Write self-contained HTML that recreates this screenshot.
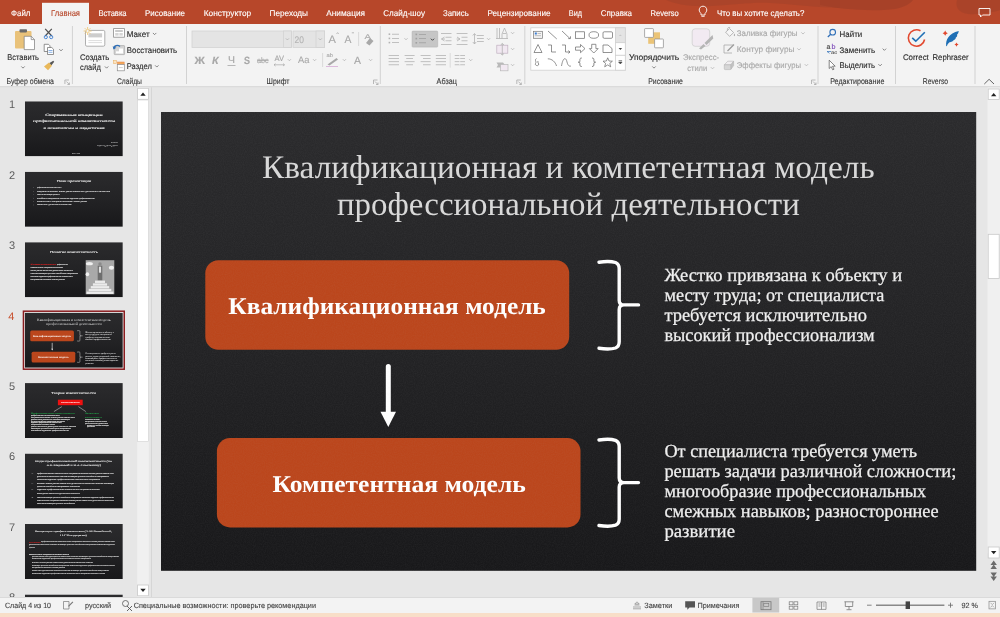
<!DOCTYPE html>
<html><head><meta charset="utf-8"><title>PowerPoint</title>
<style>html,body{margin:0;padding:0;width:1000px;height:617px;overflow:hidden;background:#e6e6e6;font-family:"Liberation Sans",sans-serif}svg{display:block;will-change:transform}</style></head>
<body>
<svg width="1000" height="617" viewBox="0 0 1000 617" text-rendering="geometricPrecision">
<defs>
<linearGradient id="slidebg" x1="0" y1="0" x2="0" y2="1"><stop offset="0" stop-color="#2b2b2d"/><stop offset="0.5" stop-color="#232325"/><stop offset="1" stop-color="#18181a"/></linearGradient>
<filter id="noise" x="0" y="0" width="100%" height="100%"><feTurbulence type="fractalNoise" baseFrequency="0.9" numOctaves="2" seed="3"/><feColorMatrix type="matrix" values="0 0 0 0 0.5  0 0 0 0 0.5  0 0 0 0 0.5  1.2 0 0 0 -0.35"/></filter>
<clipPath id="paneclip"><rect x="0" y="87.2" width="151" height="509.8"/></clipPath>
<clipPath id="slideclip"><rect x="161" y="112" width="815.5" height="458"/></clipPath>
</defs>
<rect x="0" y="0" width="1000" height="617" fill="#e6e6e6"/>
<rect x="0" y="0" width="1000" height="24" fill="#b7472a"/>
<path d="M666 0 C675 4 690 7 712 6 C735 5 752 2 770 3 C790 4 810 7 840 8 L840 0 Z" fill="#a2412a" opacity="0.55"/>
<path d="M820 0 L820 5 C840 9 870 12 895 9 C905 7 910 4 913 0 Z" fill="#9e3f28" opacity="0.65"/>
<path d="M957 0 C955 6 958 13 968 14 C980 15 995 12 1000 10 L1000 0 Z" fill="#a2412a" opacity="0.6"/>
<rect x="42" y="2.8" width="47" height="22" fill="#f3f3f3"/>
<text x="11.00" y="16.20" font-family="'Liberation Sans', sans-serif" font-size="8.4" font-weight="400" fill="#ffffff" stroke="#ffffff" stroke-width="0.12" textLength="19.40" lengthAdjust="spacingAndGlyphs" >Файл</text>
<text x="51.00" y="16.20" font-family="'Liberation Sans', sans-serif" font-size="8.4" font-weight="400" fill="#b7472a" stroke="#b7472a" stroke-width="0.12" textLength="29.00" lengthAdjust="spacingAndGlyphs" >Главная</text>
<text x="98.40" y="16.20" font-family="'Liberation Sans', sans-serif" font-size="8.4" font-weight="400" fill="#ffffff" stroke="#ffffff" stroke-width="0.12" textLength="28.20" lengthAdjust="spacingAndGlyphs" >Вставка</text>
<text x="145.00" y="16.20" font-family="'Liberation Sans', sans-serif" font-size="8.4" font-weight="400" fill="#ffffff" stroke="#ffffff" stroke-width="0.12" textLength="40.00" lengthAdjust="spacingAndGlyphs" >Рисование</text>
<text x="203.75" y="16.20" font-family="'Liberation Sans', sans-serif" font-size="8.4" font-weight="400" fill="#ffffff" stroke="#ffffff" stroke-width="0.12" textLength="47.50" lengthAdjust="spacingAndGlyphs" >Конструктор</text>
<text x="269.50" y="16.20" font-family="'Liberation Sans', sans-serif" font-size="8.4" font-weight="400" fill="#ffffff" stroke="#ffffff" stroke-width="0.12" textLength="38.50" lengthAdjust="spacingAndGlyphs" >Переходы</text>
<text x="326.25" y="16.20" font-family="'Liberation Sans', sans-serif" font-size="8.4" font-weight="400" fill="#ffffff" stroke="#ffffff" stroke-width="0.12" textLength="38.75" lengthAdjust="spacingAndGlyphs" >Анимация</text>
<text x="383.25" y="16.20" font-family="'Liberation Sans', sans-serif" font-size="8.4" font-weight="400" fill="#ffffff" stroke="#ffffff" stroke-width="0.12" textLength="41.75" lengthAdjust="spacingAndGlyphs" >Слайд-шоу</text>
<text x="443.00" y="16.20" font-family="'Liberation Sans', sans-serif" font-size="8.4" font-weight="400" fill="#ffffff" stroke="#ffffff" stroke-width="0.12" textLength="25.75" lengthAdjust="spacingAndGlyphs" >Запись</text>
<text x="487.50" y="16.20" font-family="'Liberation Sans', sans-serif" font-size="8.4" font-weight="400" fill="#ffffff" stroke="#ffffff" stroke-width="0.12" textLength="63.00" lengthAdjust="spacingAndGlyphs" >Рецензирование</text>
<text x="568.75" y="16.20" font-family="'Liberation Sans', sans-serif" font-size="8.4" font-weight="400" fill="#ffffff" stroke="#ffffff" stroke-width="0.12" textLength="13.25" lengthAdjust="spacingAndGlyphs" >Вид</text>
<text x="600.75" y="16.20" font-family="'Liberation Sans', sans-serif" font-size="8.4" font-weight="400" fill="#ffffff" stroke="#ffffff" stroke-width="0.12" textLength="31.25" lengthAdjust="spacingAndGlyphs" >Справка</text>
<text x="650.50" y="16.20" font-family="'Liberation Sans', sans-serif" font-size="8.4" font-weight="400" fill="#ffffff" stroke="#ffffff" stroke-width="0.12" textLength="28.25" lengthAdjust="spacingAndGlyphs" >Reverso</text>
<text x="716.90" y="16.20" font-family="'Liberation Sans', sans-serif" font-size="8.4" font-weight="400" fill="#ffffff" stroke="#ffffff" stroke-width="0.12" textLength="87.40" lengthAdjust="spacingAndGlyphs" >Что вы хотите сделать?</text>
<path d="M703 6.2 C700.6 6.2 699.2 8 699.2 10 C699.2 11.7 700.4 12.6 701 13.6 L701 15 L705 15 L705 13.6 C705.6 12.6 706.8 11.7 706.8 10 C706.8 8 705.4 6.2 703 6.2 Z M701.4 16.3 H704.6" fill="none" stroke="#fff" stroke-width="0.9"/>
<path d="M979 8.5 H990 V15 H982.5 L980.5 17 V15 H979 Z" fill="none" stroke="#fff" stroke-width="0.9"/>
<rect x="0" y="24" width="1000" height="62.5" fill="#f3f3f3"/>
<rect x="0" y="86.2" width="1000" height="1" fill="#d6d6d6"/>
<text x="6.50" y="84.20" font-family="'Liberation Sans', sans-serif" font-size="8.2" font-weight="400" fill="#3a3a3a" stroke="#3a3a3a" stroke-width="0.12" textLength="47.50" lengthAdjust="spacingAndGlyphs" >Буфер обмена</text>
<text x="116.90" y="84.20" font-family="'Liberation Sans', sans-serif" font-size="8.2" font-weight="400" fill="#383838" stroke="#383838" stroke-width="0.12" textLength="25.00" lengthAdjust="spacingAndGlyphs" >Слайды</text>
<text x="266.60" y="84.20" font-family="'Liberation Sans', sans-serif" font-size="8.2" font-weight="400" fill="#383838" stroke="#383838" stroke-width="0.12" textLength="22.80" lengthAdjust="spacingAndGlyphs" >Шрифт</text>
<text x="436.60" y="84.20" font-family="'Liberation Sans', sans-serif" font-size="8.2" font-weight="400" fill="#383838" stroke="#383838" stroke-width="0.12" textLength="20.30" lengthAdjust="spacingAndGlyphs" >Абзац</text>
<text x="648.20" y="84.20" font-family="'Liberation Sans', sans-serif" font-size="8.2" font-weight="400" fill="#383838" stroke="#383838" stroke-width="0.12" textLength="34.70" lengthAdjust="spacingAndGlyphs" >Рисование</text>
<text x="830.20" y="84.20" font-family="'Liberation Sans', sans-serif" font-size="8.2" font-weight="400" fill="#383838" stroke="#383838" stroke-width="0.12" textLength="54.20" lengthAdjust="spacingAndGlyphs" >Редактирование</text>
<text x="922.70" y="84.20" font-family="'Liberation Sans', sans-serif" font-size="8.2" font-weight="400" fill="#383838" stroke="#383838" stroke-width="0.12" textLength="25.50" lengthAdjust="spacingAndGlyphs" >Reverso</text>
<rect x="71.90" y="26" width="1" height="58" fill="#d2d2d2"/>
<rect x="186.00" y="26" width="1" height="58" fill="#d2d2d2"/>
<rect x="379.80" y="26" width="1" height="58" fill="#d2d2d2"/>
<rect x="524.30" y="26" width="1" height="58" fill="#d2d2d2"/>
<rect x="817.50" y="26" width="1" height="58" fill="#d2d2d2"/>
<rect x="895.00" y="26" width="1" height="58" fill="#d2d2d2"/>
<rect x="974.50" y="26" width="1" height="58" fill="#d2d2d2"/>
<path d="M64.9 84.0 V80.0 H68.9" fill="none" stroke="#a8a8a8" stroke-width="0.8"/>
<path d="M66.4 81.5 L69.4 84.5 M69.4 82.5 V84.5 H67.4" fill="none" stroke="#a8a8a8" stroke-width="0.8"/>
<path d="M373.5 84.0 V80.0 H377.5" fill="none" stroke="#a8a8a8" stroke-width="0.8"/>
<path d="M375 81.5 L378 84.5 M378 82.5 V84.5 H376" fill="none" stroke="#a8a8a8" stroke-width="0.8"/>
<path d="M516.8 84.0 V80.0 H520.8" fill="none" stroke="#a8a8a8" stroke-width="0.8"/>
<path d="M518.3 81.5 L521.3 84.5 M521.3 82.5 V84.5 H519.3" fill="none" stroke="#a8a8a8" stroke-width="0.8"/>
<path d="M811.5 84.0 V80.0 H815.5" fill="none" stroke="#a8a8a8" stroke-width="0.8"/>
<path d="M813 81.5 L816 84.5 M816 82.5 V84.5 H814" fill="none" stroke="#a8a8a8" stroke-width="0.8"/>
<rect x="15" y="31" width="16.5" height="17.5" rx="1" fill="#e9c27a"/>
<rect x="19.5" y="29.2" width="7.5" height="3.2" rx="0.8" fill="#6b6b6b"/>
<path d="M24.2 36.3 H31.2 L34.5 39.6 V49.6 H24.2 Z" fill="#fff" stroke="#7a7a7a" stroke-width="0.7"/>
<path d="M31.2 36.3 V39.6 H34.5" fill="none" stroke="#7a7a7a" stroke-width="0.7"/>
<text x="7.20" y="59.70" font-family="'Liberation Sans', sans-serif" font-size="8.2" font-weight="400" fill="#2a2a2a" stroke="#2a2a2a" stroke-width="0.12" textLength="31.80" lengthAdjust="spacingAndGlyphs" >Вставить</text>
<path d="M21.30 66.45 L23.00 68.15 L24.70 66.45" fill="none" stroke="#6a6a6a" stroke-width="0.8"/>
<path d="M45.2 28.8 L51.8 36 M51.8 28.8 L45.2 36" stroke="#505050" stroke-width="1.2" fill="none"/>
<circle cx="45.8" cy="37.1" r="1.6" fill="none" stroke="#3b7ed4" stroke-width="0.9"/><circle cx="51.2" cy="37.1" r="1.6" fill="none" stroke="#3b7ed4" stroke-width="0.9"/>
<path d="M44.2 44.3 H48.5 L50 45.8 V51.5 H44.2 Z" fill="#fff" stroke="#666" stroke-width="0.7"/>
<path d="M47.5 47.5 H51.8 L53.5 49.2 V54.5 H47.5 Z" fill="#fff" stroke="#666" stroke-width="0.7"/>
<path d="M48.5 50.5 H52.5 M48.5 52.3 H52.5" stroke="#3b7ed4" stroke-width="0.6"/>
<path d="M59.30 49.15 L61.00 50.85 L62.70 49.15" fill="none" stroke="#6a6a6a" stroke-width="0.8"/>
<path d="M44 66.5 L49 62.5 L52 65.7 L48 70.2 Z" fill="#e9b85a"/>
<path d="M49.5 63 L53.3 60.8 L54.2 61.8 L51.5 65.2 Z" fill="#555"/>
<rect x="85.5" y="30.4" width="19.3" height="15.8" rx="1.4" fill="#fff" stroke="#9a9a9a" stroke-width="0.8"/>
<rect x="88.4" y="33.3" width="13.7" height="4.1" fill="#cdcdcd"/>
<path d="M88.4 40.6 H102 M88.4 42.6 H102" stroke="#c4c4c4" stroke-width="0.6"/>
<circle cx="87.6" cy="31" r="1.6" fill="#f3f3f3" stroke="#efc36a" stroke-width="0.7"/>
<path d="M87.6 27 V29 M87.6 33 V35 M83.6 31 H85.6 M89.6 31 H91.6 M84.8 28.2 L86.2 29.6 M89 32.4 L90.4 33.8 M90.4 28.2 L89 29.6 M86.2 32.4 L84.8 33.8" stroke="#efc36a" stroke-width="0.8"/>
<text x="80.00" y="59.70" font-family="'Liberation Sans', sans-serif" font-size="8.2" font-weight="400" fill="#2a2a2a" stroke="#2a2a2a" stroke-width="0.12" textLength="29.20" lengthAdjust="spacingAndGlyphs" >Создать</text>
<text x="80.00" y="70.40" font-family="'Liberation Sans', sans-serif" font-size="8.2" font-weight="400" fill="#2a2a2a" stroke="#2a2a2a" stroke-width="0.12" textLength="20.80" lengthAdjust="spacingAndGlyphs" >слайд</text>
<path d="M104.90 66.45 L106.60 68.15 L108.30 66.45" fill="none" stroke="#6a6a6a" stroke-width="0.8"/>
<rect x="113.6" y="28.6" width="10.8" height="8.6" fill="#fff" stroke="#8d8d8d" stroke-width="0.8"/>
<rect x="115.2" y="30.2" width="7.6" height="1.6" fill="#bdbdbd"/><rect x="115.2" y="33" width="3.4" height="2.6" fill="#d6d6d6"/><rect x="119.4" y="33" width="3.4" height="2.6" fill="#d6d6d6"/>
<text x="126.80" y="37.00" font-family="'Liberation Sans', sans-serif" font-size="8.2" font-weight="400" fill="#2a2a2a" stroke="#2a2a2a" stroke-width="0.12" textLength="22.80" lengthAdjust="spacingAndGlyphs" >Макет</text>
<path d="M152.90 32.95 L154.60 34.65 L156.30 32.95" fill="none" stroke="#6a6a6a" stroke-width="0.8"/>
<rect x="114.2" y="45.6" width="10.4" height="9" rx="0.6" fill="#d4d4d4" stroke="#a8a8a8" stroke-width="0.7"/>
<path d="M119 48.5 H123 V53.4 H119 Z M116 51.5 H119" fill="#fff" stroke="none"/><rect x="116" y="51.3" width="3" height="2.1" fill="#fff"/>
<path d="M113.8 48.6 C114.2 45.6 117.5 44.4 120 46.4" fill="none" stroke="#2f6fb8" stroke-width="1.3"/><path d="M112.7 46.2 L113.6 49.4 L116.4 47.8 Z" fill="#2f6fb8"/>
<text x="126.80" y="53.20" font-family="'Liberation Sans', sans-serif" font-size="8.2" font-weight="400" fill="#2a2a2a" stroke="#2a2a2a" stroke-width="0.12" textLength="50.30" lengthAdjust="spacingAndGlyphs" >Восстановить</text>
<rect x="113.6" y="60.6" width="2.8" height="2.8" fill="#fbe3c0" stroke="#eab36a" stroke-width="0.6"/>
<rect x="117.4" y="62" width="6.8" height="2.4" fill="#f2a65a" stroke="#e8884a" stroke-width="0.5"/>
<rect x="117.3" y="64.6" width="7" height="6.2" fill="#fff" stroke="#8d8d8d" stroke-width="0.7"/><path d="M118.8 67.6 H122.8" stroke="#b0b0b0" stroke-width="0.6"/>
<text x="126.80" y="69.40" font-family="'Liberation Sans', sans-serif" font-size="8.2" font-weight="400" fill="#2a2a2a" stroke="#2a2a2a" stroke-width="0.12" textLength="25.00" lengthAdjust="spacingAndGlyphs" >Раздел</text>
<path d="M155.10 65.35 L156.80 67.05 L158.50 65.35" fill="none" stroke="#6a6a6a" stroke-width="0.8"/>
<rect x="192" y="31" width="99.4" height="16.4" fill="#e4e4e4" stroke="#d2d2d2" stroke-width="0.8"/>
<rect x="283.4" y="31" width="8" height="16.4" fill="#e4e4e4" stroke="#d2d2d2" stroke-width="0.8"/>
<path d="M285.90 38.45 L287.40 39.95 L288.90 38.45" fill="none" stroke="#b0b0b0" stroke-width="0.8"/>
<rect x="293" y="31" width="31.6" height="16.4" fill="#e4e4e4" stroke="#d2d2d2" stroke-width="0.8"/>
<rect x="316" y="31" width="8.6" height="16.4" fill="#e4e4e4" stroke="#d2d2d2" stroke-width="0.8"/>
<path d="M318.80 38.45 L320.30 39.95 L321.80 38.45" fill="none" stroke="#b0b0b0" stroke-width="0.8"/>
<text x="294.60" y="42.70" font-family="'Liberation Sans', sans-serif" font-size="9.5" font-weight="400" fill="#b4b4b4" stroke="#b4b4b4" stroke-width="0.12" textLength="9.40" lengthAdjust="spacingAndGlyphs" >20</text>
<text x="328.60" y="43.30" font-family="'Liberation Sans', sans-serif" font-size="11" font-weight="400" fill="#a8a8a8" stroke="#a8a8a8" stroke-width="0.12" textLength="7.40" lengthAdjust="spacingAndGlyphs" >A</text>
<text x="344.60" y="43.30" font-family="'Liberation Sans', sans-serif" font-size="11" font-weight="400" fill="#a8a8a8" stroke="#a8a8a8" stroke-width="0.12" textLength="6.90" lengthAdjust="spacingAndGlyphs" >A</text>
<path d="M336.5 34 L337.6 32.6 L338.7 34" fill="none" stroke="#a8a8a8" stroke-width="0.7"/>
<path d="M351.8 32.8 H354" stroke="#a8a8a8" stroke-width="0.8"/>
<rect x="358.10" y="32" width="1" height="14" fill="#dadada"/>
<text x="364.60" y="39.00" font-family="'Liberation Sans', sans-serif" font-size="7" font-weight="400" fill="#a8a8a8" stroke="#a8a8a8" stroke-width="0.12" textLength="6.40" lengthAdjust="spacingAndGlyphs" >A</text>
<path d="M366 43 L370 38 L373.5 41 L369.5 45.5 Z" fill="#a8a8a8"/>
<text x="194.60" y="63.60" font-family="'Liberation Sans', sans-serif" font-size="10.5" font-weight="700" fill="#a8a8a8" stroke="#a8a8a8" stroke-width="0.12" textLength="10.40" lengthAdjust="spacingAndGlyphs" >Ж</text>
<text x="212.00" y="63.60" font-family="'Liberation Sans', sans-serif" font-size="10.5" font-weight="700" fill="#a8a8a8" stroke="#a8a8a8" stroke-width="0.12" textLength="6.60" lengthAdjust="spacingAndGlyphs" font-style="italic">К</text>
<text x="228.00" y="63.00" font-family="'Liberation Sans', sans-serif" font-size="10" font-weight="400" fill="#a8a8a8" stroke="#a8a8a8" stroke-width="0.12" textLength="7.00" lengthAdjust="spacingAndGlyphs" >Ч</text>
<rect x="227.5" y="65" width="8" height="0.8" fill="#a8a8a8"/>
<text x="244.00" y="63.60" font-family="'Liberation Sans', sans-serif" font-size="10.5" font-weight="700" fill="#a8a8a8" stroke="#a8a8a8" stroke-width="0.12" textLength="6.00" lengthAdjust="spacingAndGlyphs" >S</text>
<text x="257.00" y="63.00" font-family="'Liberation Sans', sans-serif" font-size="7.8" font-weight="400" fill="#a8a8a8" stroke="#a8a8a8" stroke-width="0.12" textLength="11.60" lengthAdjust="spacingAndGlyphs" >abc</text>
<rect x="257" y="60.2" width="11.6" height="0.8" fill="#a8a8a8"/>
<text x="274.50" y="61.00" font-family="'Liberation Sans', sans-serif" font-size="8" font-weight="400" fill="#a8a8a8" stroke="#a8a8a8" stroke-width="0.12" textLength="9.50" lengthAdjust="spacingAndGlyphs" >AV</text>
<path d="M274 64.8 H284.5 M275.5 63.6 L274 64.8 L275.5 66 M283 63.6 L284.5 64.8 L283 66" fill="none" stroke="#a8a8a8" stroke-width="0.7"/>
<path d="M287.90 59.25 L289.40 60.75 L290.90 59.25" fill="none" stroke="#b0b0b0" stroke-width="0.8"/>
<text x="298.00" y="63.00" font-family="'Liberation Sans', sans-serif" font-size="9.5" font-weight="400" fill="#a8a8a8" stroke="#a8a8a8" stroke-width="0.12" textLength="11.40" lengthAdjust="spacingAndGlyphs" >Aa</text>
<path d="M313.10 59.25 L314.60 60.75 L316.10 59.25" fill="none" stroke="#b0b0b0" stroke-width="0.8"/>
<rect x="322.10" y="53" width="1" height="14" fill="#dadada"/>
<text x="326.50" y="57.00" font-family="'Liberation Sans', sans-serif" font-size="5.5" font-weight="400" fill="#a8a8a8" stroke="#a8a8a8" stroke-width="0.12" textLength="6.50" lengthAdjust="spacingAndGlyphs" >ab</text>
<path d="M327.5 64.5 L336.5 58 L338 59.5 L329.5 65.5 Z" fill="#a8a8a8"/><rect x="326" y="66" width="12" height="0.9" fill="#d9b3d9"/>
<path d="M342.90 59.25 L344.40 60.75 L345.90 59.25" fill="none" stroke="#b0b0b0" stroke-width="0.8"/>
<text x="354.00" y="63.60" font-family="'Liberation Sans', sans-serif" font-size="10.5" font-weight="400" fill="#a8a8a8" stroke="#a8a8a8" stroke-width="0.12" textLength="7.00" lengthAdjust="spacingAndGlyphs" >A</text>
<path d="M369.10 59.25 L370.60 60.75 L372.10 59.25" fill="none" stroke="#b0b0b0" stroke-width="0.8"/>
<rect x="388.6" y="33.400000000000006" width="1.6" height="1.6" fill="#b3b3b3"/><rect x="392" y="33.800000000000004" width="7" height="0.8" fill="#b3b3b3"/>
<rect x="388.6" y="37.6" width="1.6" height="1.6" fill="#b3b3b3"/><rect x="392" y="38.0" width="7" height="0.8" fill="#b3b3b3"/>
<rect x="388.6" y="41.800000000000004" width="1.6" height="1.6" fill="#b3b3b3"/><rect x="392" y="42.2" width="7" height="0.8" fill="#b3b3b3"/>
<path d="M404.50 38.25 L406.00 39.75 L407.50 38.25" fill="none" stroke="#b0b0b0" stroke-width="0.8"/>
<rect x="412.1" y="31.1" width="25.6" height="16" rx="0.8" fill="#c6c6c6" stroke="#b3b3b3" stroke-width="0.6"/>
<rect x="415.5" y="33.6" width="1.6" height="1.6" fill="#a0a0a0"/><rect x="419" y="34.0" width="7" height="0.8" fill="#a0a0a0"/>
<rect x="415.5" y="37.800000000000004" width="1.6" height="1.6" fill="#a0a0a0"/><rect x="419" y="38.2" width="7" height="0.8" fill="#a0a0a0"/>
<rect x="415.5" y="42.0" width="1.6" height="1.6" fill="#a0a0a0"/><rect x="419" y="42.4" width="7" height="0.8" fill="#a0a0a0"/>
<path d="M430.90 38.70 L432.50 40.30 L434.10 38.70" fill="none" stroke="#444" stroke-width="1.0"/>
<rect x="441" y="33.1" width="10.5" height="0.8" fill="#b3b3b3"/>
<rect x="441" y="44.1" width="10.5" height="0.8" fill="#b3b3b3"/>
<rect x="445.5" y="36.800000000000004" width="6.0" height="0.8" fill="#b3b3b3"/>
<rect x="445.5" y="40.4" width="6.0" height="0.8" fill="#b3b3b3"/>
<path d="M444.5 37 L441.5 39 L444.5 41 M441.5 39 H445" fill="none" stroke="#b3b3b3" stroke-width="0.8"/>
<rect x="456.6" y="33.1" width="10.899999999999977" height="0.8" fill="#b3b3b3"/>
<rect x="456.6" y="44.1" width="10.899999999999977" height="0.8" fill="#b3b3b3"/>
<rect x="461.5" y="36.800000000000004" width="6.0" height="0.8" fill="#b3b3b3"/>
<rect x="461.5" y="40.4" width="6.0" height="0.8" fill="#b3b3b3"/>
<path d="M457 37 L460 39 L457 41 M456.6 39 H460" fill="none" stroke="#b3b3b3" stroke-width="0.8"/>
<rect x="477" y="35.1" width="6.800000000000011" height="0.8" fill="#b3b3b3"/>
<rect x="477" y="38.1" width="6.800000000000011" height="0.8" fill="#b3b3b3"/>
<rect x="477" y="41.1" width="6.800000000000011" height="0.8" fill="#b3b3b3"/>
<path d="M472.8 35.5 L474.5 33.5 L476.2 35.5 M474.5 34 V44 M472.8 42 L474.5 44 L476.2 42" fill="none" stroke="#b3b3b3" stroke-width="0.8"/>
<path d="M487.10 38.25 L488.60 39.75 L490.10 38.25" fill="none" stroke="#b0b0b0" stroke-width="0.8"/>
<path d="M497 28 V38.5 M499.5 28 V38.5 M502 38.5 V34 L504.5 28 L507 34 V38.5 M502.8 33.5 H506.2 M496 38.5 H508" fill="none" stroke="#b3b3b3" stroke-width="0.8"/>
<path d="M511.10 32.25 L512.60 33.75 L514.10 32.25" fill="none" stroke="#b0b0b0" stroke-width="0.8"/>
<rect x="496.8" y="45.2" width="11" height="8" fill="#f1e8f1" stroke="#c0b0c0" stroke-width="0.7"/><path d="M502.3 43.5 V55 M500.6 45 L502.3 43.5 L504 45 M500.6 53.5 L502.3 55 L504 53.5" fill="none" stroke="#b3b3b3" stroke-width="0.8"/>
<path d="M511.10 48.25 L512.60 49.75 L514.10 48.25" fill="none" stroke="#b0b0b0" stroke-width="0.8"/>
<path d="M496.5 62.5 H503 L505 65 L503 67.5 H496.5 L498 65 Z" fill="#b9b9b9"/><rect x="500.5" y="64.5" width="7.5" height="6.3" fill="#f1e8f1" stroke="#b9b9b9" stroke-width="0.7"/>
<path d="M511.10 64.25 L512.60 65.75 L514.10 64.25" fill="none" stroke="#b0b0b0" stroke-width="0.8"/>
<rect x="388.6" y="55.1" width="10.399999999999977" height="0.8" fill="#b3b3b3"/>
<rect x="388.6" y="58.2" width="10.399999999999977" height="0.8" fill="#b3b3b3"/>
<rect x="388.6" y="61.300000000000004" width="10.399999999999977" height="0.8" fill="#b3b3b3"/>
<rect x="388.6" y="64.39999999999999" width="10.399999999999977" height="0.8" fill="#b3b3b3"/>
<rect x="404.6" y="55.1" width="10.0" height="0.8" fill="#b3b3b3"/>
<rect x="404.6" y="61.300000000000004" width="10.0" height="0.8" fill="#b3b3b3"/>
<rect x="406.2" y="58.2" width="6.800000000000011" height="0.8" fill="#b3b3b3"/>
<rect x="406.2" y="64.39999999999999" width="6.800000000000011" height="0.8" fill="#b3b3b3"/>
<rect x="420.6" y="55.1" width="10.0" height="0.8" fill="#b3b3b3"/>
<rect x="420.6" y="61.300000000000004" width="10.0" height="0.8" fill="#b3b3b3"/>
<rect x="423" y="58.2" width="7.600000000000023" height="0.8" fill="#b3b3b3"/>
<rect x="423" y="64.39999999999999" width="7.600000000000023" height="0.8" fill="#b3b3b3"/>
<rect x="435.8" y="55.1" width="10.199999999999989" height="0.8" fill="#b3b3b3"/>
<rect x="435.8" y="58.2" width="10.199999999999989" height="0.8" fill="#b3b3b3"/>
<rect x="435.8" y="61.300000000000004" width="10.199999999999989" height="0.8" fill="#b3b3b3"/>
<rect x="435.8" y="64.39999999999999" width="10.199999999999989" height="0.8" fill="#b3b3b3"/>
<rect x="449.70" y="53" width="1" height="14.599999999999994" fill="#dadada"/>
<rect x="454.7" y="55.1" width="10.300000000000011" height="0.8" fill="#b3b3b3"/>
<rect x="454.7" y="58.2" width="10.300000000000011" height="0.8" fill="#b3b3b3"/>
<rect x="454.7" y="61.300000000000004" width="10.300000000000011" height="0.8" fill="#b3b3b3"/>
<rect x="454.7" y="64.39999999999999" width="10.300000000000011" height="0.8" fill="#b3b3b3"/>
<rect x="459.4" y="55" width="0.8" height="10.2" fill="#f3f3f3"/>
<path d="M469.20 59.25 L470.70 60.75 L472.20 59.25" fill="none" stroke="#b0b0b0" stroke-width="0.8"/>
<rect x="530.8" y="27.8" width="94.5" height="42.4" fill="#fff" stroke="#d0d0d0" stroke-width="0.8"/>
<rect x="615.4" y="27.8" width="9.9" height="14.9" fill="#e4e4e4" stroke="#d0d0d0" stroke-width="0.8"/>
<rect x="615.4" y="42.7" width="9.9" height="12.6" fill="#fff" stroke="#d0d0d0" stroke-width="0.8"/>
<rect x="615.4" y="55.3" width="9.9" height="14.9" fill="#fff" stroke="#d0d0d0" stroke-width="0.8"/>
<path d="M618.8 36 L620.35 34.5 L621.9 36 Z" fill="#c8c8c8"/>
<path d="M618.6 48 L620.35 50 L622.1 48 Z" fill="#444"/>
<path d="M618.6 60.6 H622.1 M618.6 62 L620.35 64 L622.1 62 Z" fill="#444" stroke="#444" stroke-width="0.6"/>
<rect x="533.5" y="31.3" width="9" height="7" fill="#f4f4f4" stroke="#777" stroke-width="0.7"/><rect x="534.8" y="32.5" width="2" height="2" fill="#3b7ed4"/><path d="M537.5 33.5 H541 M534.8 35.7 H541" stroke="#888" stroke-width="0.5"/><path d="M548 31 L556.8 39" stroke="#666" stroke-width="0.7"/><path d="M562 31 L570 38.6 M568.2 38.6 H570.5 V36.3" fill="none" stroke="#666" stroke-width="0.7"/><rect x="575.5" y="31.8" width="9" height="6.5" fill="none" stroke="#666" stroke-width="0.7"/><ellipse cx="593.8" cy="35" rx="4.8" ry="3.3" fill="none" stroke="#666" stroke-width="0.7"/><rect x="603" y="31.8" width="9.5" height="6.5" rx="1.2" fill="none" stroke="#666" stroke-width="0.7"/><path d="M534 52.5 L538 44.5 L542 52.5 Z" fill="none" stroke="#666" stroke-width="0.7"/><path d="M548 45 H551.5 V52 H556" fill="none" stroke="#666" stroke-width="0.7"/><path d="M562 45 H565.5 V52 H570 M568.3 50.6 L570 52 L568.3 53.4" fill="none" stroke="#666" stroke-width="0.7"/><path d="M575.5 47 H580.5 V44.5 L585 48.6 L580.5 52.7 V50.2 H575.5 Z" fill="none" stroke="#666" stroke-width="0.7"/><path d="M591.7 44.3 H595.9 V48.6 H598.2 L593.8 53 L589.4 48.6 H591.7 Z" fill="none" stroke="#666" stroke-width="0.7"/><path d="M603 45 H608 L612 48.5 V52.5 H603 Z" fill="none" stroke="#666" stroke-width="0.7"/><path d="M536.5 58.5 C534 60 537 62 535.5 63.5 C534.5 65 537.5 66.5 538.5 65 C539.5 63.5 537 62.5 538 61" fill="none" stroke="#666" stroke-width="0.7"/><path d="M547.8 58.8 C552 58.8 555.5 62 556.5 66" fill="none" stroke="#666" stroke-width="0.7"/><path d="M561.5 66 C563 57 566 57 567 62 C568 66 569.5 66.5 571 66" fill="none" stroke="#666" stroke-width="0.7"/><path d="M581.8 58 C579.8 58 579.9 59 579.9 60.5 V61.3 C579.9 62 579.2 62.2 578.2 62.2 C579.2 62.2 579.9 62.4 579.9 63.1 V64 C579.9 65.5 579.8 66.5 581.8 66.5" fill="none" stroke="#666" stroke-width="0.8"/><path d="M592 58 C594 58 593.9 59 593.9 60.5 V61.3 C593.9 62 594.6 62.2 595.6 62.2 C594.6 62.2 593.9 62.4 593.9 63.1 V64 C593.9 65.5 594 66.5 592 66.5" fill="none" stroke="#666" stroke-width="0.8"/><path d="M607.7 57.8 L609 61 L612.4 61.2 L609.8 63.4 L610.7 66.8 L607.7 64.9 L604.7 66.8 L605.6 63.4 L603 61.2 L606.4 61 Z" fill="none" stroke="#666" stroke-width="0.7"/>
<rect x="648.2" y="32.3" width="11.8" height="11.5" fill="#ebc477"/>
<rect x="644.6" y="28.6" width="8.8" height="8.8" rx="0.6" fill="#fff" stroke="#8a8a8a" stroke-width="0.7"/>
<rect x="654.6" y="39" width="8.8" height="8.8" rx="0.6" fill="#fff" stroke="#8a8a8a" stroke-width="0.7"/>
<text x="628.90" y="59.80" font-family="'Liberation Sans', sans-serif" font-size="8.2" font-weight="400" fill="#2a2a2a" stroke="#2a2a2a" stroke-width="0.12" textLength="50.40" lengthAdjust="spacingAndGlyphs" >Упорядочить</text>
<path d="M652.30 66.45 L654.00 68.15 L655.70 66.45" fill="none" stroke="#6a6a6a" stroke-width="0.8"/>
<rect x="692.2" y="28.8" width="17.5" height="17.5" rx="3" fill="#f2eaf2" stroke="#cfcfcf" stroke-width="0.8"/>
<path d="M699 48.5 L703.5 44 L705.5 46 L701 49.5 Z M704.5 43 L712.5 35 L713.3 38.5 L706.5 45 Z" fill="#b5b5b5"/>
<text x="682.90" y="60.40" font-family="'Liberation Sans', sans-serif" font-size="8.2" font-weight="400" fill="#a8a8a8" stroke="#a8a8a8" stroke-width="0.12" textLength="36.30" lengthAdjust="spacingAndGlyphs" >Экспресс-</text>
<text x="687.20" y="70.80" font-family="'Liberation Sans', sans-serif" font-size="8.2" font-weight="400" fill="#a8a8a8" stroke="#a8a8a8" stroke-width="0.12" textLength="20.00" lengthAdjust="spacingAndGlyphs" >стили</text>
<path d="M710.80 67.15 L712.50 68.85 L714.20 67.15" fill="none" stroke="#b5b5b5" stroke-width="0.8"/>
<path d="M725.6 32.2 L729.6 28.6 L733.6 32.6 L729.6 36.4 Z" fill="#f6f6f6" stroke="#a8a8a8" stroke-width="0.8"/><path d="M727.4 30.4 C727 28 728.6 26.8 730.2 27.6" fill="none" stroke="#a8a8a8" stroke-width="0.7"/><path d="M734.4 33.6 C735.4 35 735.2 36 734.4 36.2 C733.6 36 733.6 35 734.4 33.6 Z" fill="#a8a8a8"/>
<text x="736.80" y="36.40" font-family="'Liberation Sans', sans-serif" font-size="8.2" font-weight="400" fill="#a8a8a8" stroke="#a8a8a8" stroke-width="0.12" textLength="60.80" lengthAdjust="spacingAndGlyphs" >Заливка фигуры</text>
<path d="M801.30 32.35 L803.00 34.05 L804.70 32.35" fill="none" stroke="#b5b5b5" stroke-width="0.8"/>
<path d="M733 45 H724 V53 H732" fill="none" stroke="#a8a8a8" stroke-width="0.8"/><path d="M727.5 51 L734 44.5" stroke="#9b9b9b" stroke-width="1.2"/>
<text x="736.80" y="52.40" font-family="'Liberation Sans', sans-serif" font-size="8.2" font-weight="400" fill="#a8a8a8" stroke="#a8a8a8" stroke-width="0.12" textLength="57.60" lengthAdjust="spacingAndGlyphs" >Контур фигуры</text>
<path d="M797.30 48.35 L799.00 50.05 L800.70 48.35" fill="none" stroke="#b5b5b5" stroke-width="0.8"/>
<path d="M724.3 64.8 L727.8 61.2 H733.6 L731 64.8 Z" fill="#f0eef0" stroke="#b5b5b5" stroke-width="0.6"/><path d="M724.3 64.8 H731 V68.8 Q731 69.6 730.2 69.6 H725.1 Q724.3 69.6 724.3 68.8 Z" fill="#d6d6d6" stroke="#b5b5b5" stroke-width="0.6"/><path d="M731 64.8 L733.6 61.2 V65.6 L731 69.2 Z" fill="#c2c2c2" stroke="#b5b5b5" stroke-width="0.6"/>
<text x="736.80" y="68.00" font-family="'Liberation Sans', sans-serif" font-size="8.2" font-weight="400" fill="#a8a8a8" stroke="#a8a8a8" stroke-width="0.12" textLength="64.20" lengthAdjust="spacingAndGlyphs" >Эффекты фигуры</text>
<path d="M804.70 64.15 L806.40 65.85 L808.10 64.15" fill="none" stroke="#b5b5b5" stroke-width="0.8"/>
<circle cx="832.7" cy="32.2" r="2.8" fill="none" stroke="#2f6fb8" stroke-width="1.1"/><path d="M830.7 34.3 L827.8 37" stroke="#2f6fb8" stroke-width="1.3"/>
<text x="839.60" y="36.60" font-family="'Liberation Sans', sans-serif" font-size="8.2" font-weight="400" fill="#2a2a2a" stroke="#2a2a2a" stroke-width="0.12" textLength="22.60" lengthAdjust="spacingAndGlyphs" >Найти</text>
<text x="826.50" y="48.50" font-family="'Liberation Sans', sans-serif" font-size="6.8" font-weight="400" fill="#444" stroke="#444" stroke-width="0.12" textLength="4.00" lengthAdjust="spacingAndGlyphs" >a</text>
<text x="831.50" y="48.50" font-family="'Liberation Sans', sans-serif" font-size="7" font-weight="400" fill="#7a46b8" stroke="#7a46b8" stroke-width="0.12" textLength="4.00" lengthAdjust="spacingAndGlyphs" >b</text>
<path d="M827 51.5 L829.5 53.3 M827 51.5 H831" stroke="#2f6fb8" stroke-width="0.7"/>
<text x="831.00" y="53.50" font-family="'Liberation Sans', sans-serif" font-size="4.8" font-weight="400" fill="#555" stroke="#555" stroke-width="0.12" textLength="6.20" lengthAdjust="spacingAndGlyphs" >ac</text>
<text x="839.60" y="52.70" font-family="'Liberation Sans', sans-serif" font-size="8.2" font-weight="400" fill="#2a2a2a" stroke="#2a2a2a" stroke-width="0.12" textLength="35.50" lengthAdjust="spacingAndGlyphs" >Заменить</text>
<path d="M882.70 48.65 L884.40 50.35 L886.10 48.65" fill="none" stroke="#6a6a6a" stroke-width="0.8"/>
<path d="M829.2 60.2 V68.5 L831.2 66.6 L832.7 69.8 L834 69.2 L832.5 66.2 L835.2 66.2 Z" fill="#fff" stroke="#555" stroke-width="0.7"/>
<text x="839.60" y="68.10" font-family="'Liberation Sans', sans-serif" font-size="8.2" font-weight="400" fill="#2a2a2a" stroke="#2a2a2a" stroke-width="0.12" textLength="35.50" lengthAdjust="spacingAndGlyphs" >Выделить</text>
<path d="M878.40 64.15 L880.10 65.85 L881.80 64.15" fill="none" stroke="#6a6a6a" stroke-width="0.8"/>
<path d="M920.5 30.8 A8.2 8.2 0 1 0 924.6 39.5" fill="none" stroke="#e2492f" stroke-width="1.6"/>
<path d="M912.2 37.8 L915.8 41.2 L924.8 32.2" fill="none" stroke="#1f6fb5" stroke-width="1.6"/>
<text x="902.90" y="60.00" font-family="'Liberation Sans', sans-serif" font-size="8.2" font-weight="400" fill="#2a2a2a" stroke="#2a2a2a" stroke-width="0.12" textLength="25.90" lengthAdjust="spacingAndGlyphs" >Correct</text>
<path d="M946.2 46 C945.5 40 948.5 33.5 958.8 31 C958.5 32.5 958 34 957 34.8 C957.5 35.8 957 37 955.8 37.6 C956 38.8 955 39.8 953.5 40.3 C953 41.5 951.5 42 949.5 42.3 C948.5 43 947.5 44.3 946.9 46.2 Z" fill="#1f6fb5"/>
<path d="M945.2 30.6 Q945.72 32.68 947.8000000000001 33.2 Q945.72 33.720000000000006 945.2 35.800000000000004 Q944.6800000000001 33.720000000000006 942.6 33.2 Q944.6800000000001 32.68 945.2 30.6 Z M956.5 42.5 Q956.92 44.18 958.6 44.6 Q956.92 45.02 956.5 46.7 Q956.08 45.02 954.4 44.6 Q956.08 44.18 956.5 42.5 Z" fill="#e2492f"/>
<text x="932.50" y="60.00" font-family="'Liberation Sans', sans-serif" font-size="8.2" font-weight="400" fill="#2a2a2a" stroke="#2a2a2a" stroke-width="0.12" textLength="36.10" lengthAdjust="spacingAndGlyphs" >Rephraser</text>
<path d="M984.3 84 L989.1 79.3 L994 84" fill="none" stroke="#555" stroke-width="0.9"/>
<g clip-path="url(#paneclip)">
<g transform="translate(24.9,101.3) scale(0.12009) translate(-161,-112)" clip-path="url(#slideclip)"><rect x="161" y="112" width="815.2" height="458.8" fill="url(#slidebg)"/>
<text x="330.0" y="233.6" font-family="'Liberation Serif', serif" font-size="28.3" font-weight="400" fill="#e6e6e6" stroke="#e6e6e6" stroke-width="0.99" opacity="1.0" textLength="478.0" lengthAdjust="spacingAndGlyphs">Современные концепции</text>
<text x="229.3" y="288.5" font-family="'Liberation Serif', serif" font-size="28.3" font-weight="400" fill="#e6e6e6" stroke="#e6e6e6" stroke-width="0.99" opacity="1.0" textLength="682.8" lengthAdjust="spacingAndGlyphs">профессиональной компетентности</text>
<text x="316.7" y="339.3" font-family="'Liberation Serif', serif" font-size="28.3" font-weight="400" fill="#e6e6e6" stroke="#e6e6e6" stroke-width="0.99" opacity="1.0" textLength="507.9" lengthAdjust="spacingAndGlyphs">в психологии и педагогике</text>
<text x="877.1" y="455.1" font-family="'Liberation Serif', serif" font-size="10.8" font-weight="400" fill="#e6e6e6" stroke="#e6e6e6" stroke-width="0.38" opacity="1.0" textLength="58.3" lengthAdjust="spacingAndGlyphs">Выполнила:</text>
<text x="760.5" y="483.4" font-family="'Liberation Serif', serif" font-size="10.8" font-weight="400" fill="#e6e6e6" stroke="#e6e6e6" stroke-width="0.38" opacity="1.0" textLength="174.9" lengthAdjust="spacingAndGlyphs">Студентка_группы_группы</text>
<text x="552.4" y="550.8" font-family="'Liberation Serif', serif" font-size="9.2" font-weight="400" fill="#e6e6e6" stroke="#e6e6e6" stroke-width="0.32" opacity="1.0" textLength="66.6" lengthAdjust="spacingAndGlyphs">Москва 2020</text></g>
<text x="9" y="108.1" font-family="'Liberation Sans', sans-serif" font-size="11" fill="#5c5c5c">1</text>
<g transform="translate(24.9,171.75) scale(0.12009) translate(-161,-112)" clip-path="url(#slideclip)"><rect x="161" y="112" width="815.2" height="458.8" fill="url(#slidebg)"/>
<text x="426.6" y="197.8" font-family="'Liberation Serif', serif" font-size="25.0" font-weight="400" fill="#e6e6e6" stroke="#e6e6e6" stroke-width="0.87" opacity="1.0" textLength="286.4" lengthAdjust="spacingAndGlyphs">План презентации</text>
<circle cx="234.3" cy="243.6" r="2.9" fill="#ccc" opacity="0.7"/>
<text x="260.9" y="247.7" font-family="'Liberation Sans', sans-serif" font-size="16.8" font-weight="400" fill="#e6e6e6" stroke="#e6e6e6" stroke-width="0.59" opacity="1.0" textLength="204.8" lengthAdjust="spacingAndGlyphs">профессиональная компетентность</text>
<circle cx="234.3" cy="275.2" r="2.9" fill="#ccc" opacity="0.7"/>
<text x="260.9" y="279.4" font-family="'Liberation Sans', sans-serif" font-size="16.8" font-weight="400" fill="#e6e6e6" stroke="#e6e6e6" stroke-width="0.59" opacity="1.0" textLength="609.5" lengthAdjust="spacingAndGlyphs">специалиста включает знания умения навыки опыт деятельности личностные</text>
<circle cx="234.3" cy="303.5" r="2.9" fill="#ccc" opacity="0.7"/>
<text x="260.9" y="307.7" font-family="'Liberation Sans', sans-serif" font-size="16.8" font-weight="400" fill="#e6e6e6" stroke="#e6e6e6" stroke-width="0.59" opacity="1.0" textLength="189.9" lengthAdjust="spacingAndGlyphs">качества мотивацию ценности</text>
<circle cx="234.3" cy="331.8" r="2.9" fill="#ccc" opacity="0.7"/>
<text x="260.9" y="336.0" font-family="'Liberation Sans', sans-serif" font-size="16.8" font-weight="400" fill="#e6e6e6" stroke="#e6e6e6" stroke-width="0.59" opacity="1.0" textLength="481.3" lengthAdjust="spacingAndGlyphs">способности саморазвитие психологии педагогике профессиональная</text>
<circle cx="234.3" cy="360.1" r="2.9" fill="#ccc" opacity="0.7"/>
<text x="260.9" y="364.3" font-family="'Liberation Sans', sans-serif" font-size="16.8" font-weight="400" fill="#e6e6e6" stroke="#e6e6e6" stroke-width="0.59" opacity="1.0" textLength="418.8" lengthAdjust="spacingAndGlyphs">компетентность специалиста включает знания умения</text>
<circle cx="234.3" cy="388.5" r="2.9" fill="#ccc" opacity="0.7"/>
<text x="260.9" y="392.6" font-family="'Liberation Sans', sans-serif" font-size="16.8" font-weight="400" fill="#e6e6e6" stroke="#e6e6e6" stroke-width="0.59" opacity="1.0" textLength="288.9" lengthAdjust="spacingAndGlyphs">навыки опыт деятельности личностные</text></g>
<text x="9" y="178.6" font-family="'Liberation Sans', sans-serif" font-size="11" fill="#5c5c5c">2</text>
<g transform="translate(24.9,242.2) scale(0.12009) translate(-161,-112)" clip-path="url(#slideclip)"><rect x="161" y="112" width="815.2" height="458.8" fill="url(#slidebg)"/>
<text x="369.2" y="201.9" font-family="'Liberation Serif', serif" font-size="25.0" font-weight="400" fill="#e6e6e6" stroke="#e6e6e6" stroke-width="0.87" opacity="1.0" textLength="398.9" lengthAdjust="spacingAndGlyphs">Понятие компетентность</text>
<text x="208.5" y="302.7" font-family="'Liberation Serif', serif" font-size="16.7" font-weight="700" fill="#e02020" stroke="#e02020" stroke-width="0.58" opacity="0.95" textLength="214.8" lengthAdjust="spacingAndGlyphs">Компетентность</text>
<text x="427.5" y="301.9" font-family="'Liberation Sans', sans-serif" font-size="15.5" font-weight="400" fill="#e6e6e6" stroke="#e6e6e6" stroke-width="0.54" opacity="1.0" textLength="91.6" lengthAdjust="spacingAndGlyphs">профессиональная</text>
<text x="208.5" y="326.8" font-family="'Liberation Sans', sans-serif" font-size="15.5" font-weight="400" fill="#e6e6e6" stroke="#e6e6e6" stroke-width="0.54" opacity="1.0" textLength="269.0" lengthAdjust="spacingAndGlyphs">компетентность специалиста включает</text>
<text x="208.5" y="351.8" font-family="'Liberation Sans', sans-serif" font-size="15.5" font-weight="400" fill="#e6e6e6" stroke="#e6e6e6" stroke-width="0.54" opacity="1.0" textLength="352.2" lengthAdjust="spacingAndGlyphs">знания умения навыки опыт деятельности личностные</text>
<text x="208.5" y="376.8" font-family="'Liberation Sans', sans-serif" font-size="15.5" font-weight="400" fill="#e6e6e6" stroke="#e6e6e6" stroke-width="0.54" opacity="1.0" textLength="393.9" lengthAdjust="spacingAndGlyphs">качества мотивацию ценности способности саморазвитие</text>
<text x="208.5" y="401.8" font-family="'Liberation Sans', sans-serif" font-size="15.5" font-weight="400" fill="#e6e6e6" stroke="#e6e6e6" stroke-width="0.54" opacity="1.0" textLength="352.2" lengthAdjust="spacingAndGlyphs">психологии педагогике профессиональная компетентность</text>
<text x="208.5" y="426.8" font-family="'Liberation Sans', sans-serif" font-size="15.5" font-weight="400" fill="#e6e6e6" stroke="#e6e6e6" stroke-width="0.54" opacity="1.0" textLength="285.6" lengthAdjust="spacingAndGlyphs">специалиста включает знания умения</text>
<rect x="667.3" y="261.9" width="238.1" height="283.9" fill="#a9a9a9"/>
<rect x="744.7" y="431.8" width="83.3" height="19.6" fill="#ececec"/>
<rect x="727.2" y="454.7" width="118.2" height="19.6" fill="#ececec"/>
<rect x="709.7" y="477.5" width="153.2" height="19.6" fill="#ececec"/>
<rect x="692.3" y="500.4" width="188.2" height="19.6" fill="#ececec"/>
<rect x="674.8" y="523.3" width="223.2" height="19.6" fill="#ececec"/>
<rect x="767.2" y="307.7" width="38.3" height="120.7" fill="#6e6e6e"/><rect x="777.2" y="316.0" width="18.3" height="50.0" fill="#e0e0e0"/><circle cx="786.3" cy="293.5" r="14.2" fill="#8a8a8a"/>
<ellipse cx="698.1" cy="291.0" rx="29.1" ry="13.3" fill="#f0f0f0"/><ellipse cx="881.3" cy="324.3" rx="21.6" ry="16.7" fill="#f0f0f0"/><ellipse cx="681.4" cy="378.5" rx="15.0" ry="16.7" fill="#f0f0f0"/></g>
<text x="9" y="249.0" font-family="'Liberation Sans', sans-serif" font-size="11" fill="#5c5c5c">3</text>
<rect x="22.7" y="310.45000000000005" width="102.30000000000001" height="59.49877330716389" fill="#8a1c1f"/>
<rect x="24.2" y="311.95000000000005" width="99.30000000000001" height="56.49877330716389" fill="#e6e6e6"/>
<g transform="translate(24.9,312.65000000000003) scale(0.12009) translate(-161,-112)" clip-path="url(#slideclip)"><rect x="161" y="112" width="815.2" height="458.8" fill="url(#slidebg)"/>
<rect x="161" y="112" width="815.2" height="458.8" fill="#000" opacity="0" />
<text x="262" y="177.9" font-family="'Liberation Serif', serif" font-size="33" fill="#d9d9d9" textLength="612.6" lengthAdjust="spacingAndGlyphs">Квалификационная и компетентная модель</text>
<text x="337" y="214.6" font-family="'Liberation Serif', serif" font-size="33" fill="#d9d9d9" textLength="462.8" lengthAdjust="spacingAndGlyphs">профессиональной деятельности</text>
<rect x="205.3" y="260.2" width="363.9" height="89.6" rx="13" fill="#bb461c"/>
<text x="228.3" y="314" font-family="'Liberation Serif', serif" font-size="24" font-weight="700" fill="#ffffff" textLength="317.5" lengthAdjust="spacingAndGlyphs">Квалификационная модель</text>
<rect x="216.9" y="438.1" width="363.6" height="89.3" rx="13" fill="#bb461c"/>
<text x="272.4" y="492.2" font-family="'Liberation Serif', serif" font-size="24" font-weight="700" fill="#ffffff" textLength="253.4" lengthAdjust="spacingAndGlyphs">Компетентная модель</text>
<path d="M388.3 366.6 V413" stroke="#fff" stroke-width="5" stroke-linecap="round"/>
<path d="M380.5 411.7 H396 L388.3 427 Z" fill="#fff"/>
<path d="M599 262.2 C605 261.3 611 261.09999999999997 615.5 262.5 C618.5 263.7 619.2 265.7 619.2 268.7 V300.4 C619.2 303.7 621 304.9 624 304.9 H638.5 M624 304.9 C621 304.9 619.2 306.09999999999997 619.2 309.4 V341.8 C619.2 344.8 618.5 346.8 615.5 348.0 C611 349.40000000000003 605 349.2 599 348.3" fill="none" stroke="#fff" stroke-width="3.4" stroke-linecap="round" stroke-linejoin="round"/>
<path d="M599 440.0 C605 439.1 611 438.9 615.5 440.3 C618.5 441.5 619.2 443.5 619.2 446.5 V478.1 C619.2 481.40000000000003 621 482.6 624 482.6 H638.5 M624 482.6 C621 482.6 619.2 483.8 619.2 487.1 V519 C619.2 522 618.5 524 615.5 525.2 C611 526.6 605 526.4 599 525.5" fill="none" stroke="#fff" stroke-width="3.4" stroke-linecap="round" stroke-linejoin="round"/>
<text x="664.4" y="280.6" font-family="'Liberation Serif', serif" font-size="18.5" fill="#f0f0f0" stroke="#f0f0f0" stroke-width="0.25" textLength="237.8" lengthAdjust="spacingAndGlyphs">Жестко привязана к объекту и</text>
<text x="664.4" y="300.8" font-family="'Liberation Serif', serif" font-size="18.5" fill="#f0f0f0" stroke="#f0f0f0" stroke-width="0.25" textLength="220.0" lengthAdjust="spacingAndGlyphs">месту труда; от специалиста</text>
<text x="664.4" y="321.1" font-family="'Liberation Serif', serif" font-size="18.5" fill="#f0f0f0" stroke="#f0f0f0" stroke-width="0.25" textLength="202.6" lengthAdjust="spacingAndGlyphs">требуется исключительно</text>
<text x="664.4" y="341.2" font-family="'Liberation Serif', serif" font-size="18.5" fill="#f0f0f0" stroke="#f0f0f0" stroke-width="0.25" textLength="210.3" lengthAdjust="spacingAndGlyphs">высокий профессионализм</text>
<text x="664.4" y="457.2" font-family="'Liberation Serif', serif" font-size="18.5" fill="#f0f0f0" stroke="#f0f0f0" stroke-width="0.25" textLength="252.6" lengthAdjust="spacingAndGlyphs">От специалиста требуется уметь</text>
<text x="664.4" y="477.2" font-family="'Liberation Serif', serif" font-size="18.5" fill="#f0f0f0" stroke="#f0f0f0" stroke-width="0.25" textLength="291.9" lengthAdjust="spacingAndGlyphs">решать задачи различной сложности;</text>
<text x="664.4" y="497.2" font-family="'Liberation Serif', serif" font-size="18.5" fill="#f0f0f0" stroke="#f0f0f0" stroke-width="0.25" textLength="261.8" lengthAdjust="spacingAndGlyphs">многообразие профессиональных</text>
<text x="664.4" y="517.2" font-family="'Liberation Serif', serif" font-size="18.5" fill="#f0f0f0" stroke="#f0f0f0" stroke-width="0.25" textLength="274.2" lengthAdjust="spacingAndGlyphs">смежных навыков; разностороннее</text>
<text x="664.4" y="536.8" font-family="'Liberation Serif', serif" font-size="18.5" fill="#f0f0f0" stroke="#f0f0f0" stroke-width="0.25" textLength="70.6" lengthAdjust="spacingAndGlyphs">развитие</text></g>
<text x="8.2" y="319.5" font-family="'Liberation Sans', sans-serif" font-size="11" fill="#c8502e">4</text>
<g transform="translate(24.9,383.1) scale(0.12009) translate(-161,-112)" clip-path="url(#slideclip)"><rect x="161" y="112" width="815.2" height="458.8" fill="url(#slidebg)"/>
<text x="380.8" y="200.3" font-family="'Liberation Serif', serif" font-size="25.0" font-weight="400" fill="#e6e6e6" stroke="#e6e6e6" stroke-width="0.87" opacity="1.0" textLength="371.4" lengthAdjust="spacingAndGlyphs">Теория компетентности</text>
<rect x="435.8" y="250.2" width="206.5" height="45.8" fill="#ee1111"/>
<text x="460.8" y="279.4" font-family="'Liberation Serif', serif" font-size="12.5" font-weight="700" fill="#fff" stroke="#fff" stroke-width="0.44" opacity="0.9" textLength="158.2" lengthAdjust="spacingAndGlyphs">Компетентность</text>
<path d="M469.1 307.7 L402.5 349.3 M606.5 307.7 L668.9 349.3" stroke="#ddd" stroke-width="4.2"/>
<text x="211.0" y="366.8" font-family="'Liberation Serif', serif" font-size="15.0" font-weight="700" fill="#22b14c" stroke="#22b14c" stroke-width="0.52" opacity="0.95" textLength="366.4" lengthAdjust="spacingAndGlyphs">Профессиональная компетентность</text>
<text x="660.6" y="366.8" font-family="'Liberation Serif', serif" font-size="15.0" font-weight="700" fill="#22b14c" stroke="#22b14c" stroke-width="0.52" opacity="0.95" textLength="116.6" lengthAdjust="spacingAndGlyphs">Личностная</text>
<text x="660.6" y="399.3" font-family="'Liberation Serif', serif" font-size="15.0" font-weight="700" fill="#22b14c" stroke="#22b14c" stroke-width="0.52" opacity="0.95" textLength="141.6" lengthAdjust="spacingAndGlyphs">компетентность</text>
<text x="211.0" y="387.6" font-family="'Liberation Sans', sans-serif" font-size="15.5" font-weight="400" fill="#e6e6e6" stroke="#e6e6e6" stroke-width="0.54" opacity="1.0" textLength="241.5" lengthAdjust="spacingAndGlyphs">профессиональная компетентность</text>
<text x="211.0" y="402.6" font-family="'Liberation Sans', sans-serif" font-size="15.5" font-weight="400" fill="#e6e6e6" stroke="#e6e6e6" stroke-width="0.54" opacity="1.0" textLength="366.4" lengthAdjust="spacingAndGlyphs">специалиста включает знания умения навыки опыт</text>
<text x="211.0" y="417.6" font-family="'Liberation Sans', sans-serif" font-size="15.5" font-weight="400" fill="#e6e6e6" stroke="#e6e6e6" stroke-width="0.54" opacity="1.0" textLength="324.7" lengthAdjust="spacingAndGlyphs">деятельности личностные качества мотивацию</text>
<text x="211.0" y="432.6" font-family="'Liberation Sans', sans-serif" font-size="15.5" font-weight="400" fill="#e6e6e6" stroke="#e6e6e6" stroke-width="0.54" opacity="1.0" textLength="283.1" lengthAdjust="spacingAndGlyphs">ценности способности саморазвитие психологии</text>
<text x="211.0" y="447.6" font-family="'Liberation Sans', sans-serif" font-size="15.5" font-weight="400" fill="#e6e6e6" stroke="#e6e6e6" stroke-width="0.54" opacity="1.0" textLength="258.1" lengthAdjust="spacingAndGlyphs">педагогике профессиональная компетентность</text>
<text x="211.0" y="462.6" font-family="'Liberation Sans', sans-serif" font-size="15.5" font-weight="400" fill="#e6e6e6" stroke="#e6e6e6" stroke-width="0.54" opacity="1.0" textLength="199.8" lengthAdjust="spacingAndGlyphs">специалиста включает знания</text>
<text x="211.0" y="477.5" font-family="'Liberation Sans', sans-serif" font-size="15.5" font-weight="400" fill="#e6e6e6" stroke="#e6e6e6" stroke-width="0.54" opacity="1.0" textLength="374.7" lengthAdjust="spacingAndGlyphs">умения навыки опыт деятельности личностные качества</text>
<text x="211.0" y="492.5" font-family="'Liberation Sans', sans-serif" font-size="15.5" font-weight="400" fill="#e6e6e6" stroke="#e6e6e6" stroke-width="0.54" opacity="1.0" textLength="333.1" lengthAdjust="spacingAndGlyphs">мотивацию ценности способности саморазвитие</text>
<text x="211.0" y="507.5" font-family="'Liberation Sans', sans-serif" font-size="15.5" font-weight="400" fill="#e6e6e6" stroke="#e6e6e6" stroke-width="0.54" opacity="1.0" textLength="316.4" lengthAdjust="spacingAndGlyphs">психологии педагогике профессиональная</text>
<text x="660.6" y="419.3" font-family="'Liberation Sans', sans-serif" font-size="15.5" font-weight="400" fill="#e6e6e6" stroke="#e6e6e6" stroke-width="0.54" opacity="1.0" textLength="124.9" lengthAdjust="spacingAndGlyphs">компетентность</text>
<text x="660.6" y="434.2" font-family="'Liberation Sans', sans-serif" font-size="15.5" font-weight="400" fill="#e6e6e6" stroke="#e6e6e6" stroke-width="0.54" opacity="1.0" textLength="183.2" lengthAdjust="spacingAndGlyphs">специалиста включает знания</text>
<text x="660.6" y="450.1" font-family="'Liberation Sans', sans-serif" font-size="15.5" font-weight="400" fill="#e6e6e6" stroke="#e6e6e6" stroke-width="0.54" opacity="1.0" textLength="191.5" lengthAdjust="spacingAndGlyphs">умения навыки опыт деятельности</text>
<text x="677.3" y="465.1" font-family="'Liberation Sans', sans-serif" font-size="15.5" font-weight="400" fill="#e6e6e6" stroke="#e6e6e6" stroke-width="0.54" opacity="1.0" textLength="183.2" lengthAdjust="spacingAndGlyphs">личностные качества мотивацию</text>
<text x="677.3" y="480.0" font-family="'Liberation Sans', sans-serif" font-size="15.5" font-weight="400" fill="#e6e6e6" stroke="#e6e6e6" stroke-width="0.54" opacity="1.0" textLength="66.6" lengthAdjust="spacingAndGlyphs">ценности</text></g>
<text x="9" y="389.9" font-family="'Liberation Sans', sans-serif" font-size="11" fill="#5c5c5c">5</text>
<g transform="translate(24.9,453.55) scale(0.12009) translate(-161,-112)" clip-path="url(#slideclip)"><rect x="161" y="112" width="815.2" height="458.8" fill="url(#slidebg)"/>
<text x="244.3" y="183.6" font-family="'Liberation Serif', serif" font-size="20.0" font-weight="400" fill="#e6e6e6" stroke="#e6e6e6" stroke-width="0.70" opacity="1.0" textLength="641.2" lengthAdjust="spacingAndGlyphs">Виды профессиональной компетентности (по</text>
<text x="340.0" y="214.4" font-family="'Liberation Serif', serif" font-size="20.0" font-weight="400" fill="#e6e6e6" stroke="#e6e6e6" stroke-width="0.70" opacity="1.0" textLength="453.8" lengthAdjust="spacingAndGlyphs">А.К.Марковой и В.А.Сластенину)</text>
<text x="260.9" y="279.4" font-family="'Liberation Sans', sans-serif" font-size="16.2" font-weight="400" fill="#e6e6e6" stroke="#e6e6e6" stroke-width="0.57" opacity="1.0" textLength="641.2" lengthAdjust="spacingAndGlyphs">профессиональная компетентность специалиста включает знания умения навыки опыт</text>
<text x="260.9" y="306.0" font-family="'Liberation Sans', sans-serif" font-size="16.2" font-weight="400" fill="#e6e6e6" stroke="#e6e6e6" stroke-width="0.57" opacity="1.0" textLength="599.5" lengthAdjust="spacingAndGlyphs">деятельности личностные качества мотивацию ценности способности саморазвитие</text>
<text x="260.9" y="332.7" font-family="'Liberation Sans', sans-serif" font-size="16.2" font-weight="400" fill="#e6e6e6" stroke="#e6e6e6" stroke-width="0.57" opacity="1.0" textLength="524.6" lengthAdjust="spacingAndGlyphs">психологии педагогике профессиональная компетентность специалиста</text>
<text x="260.9" y="364.3" font-family="'Liberation Sans', sans-serif" font-size="16.2" font-weight="400" fill="#e6e6e6" stroke="#e6e6e6" stroke-width="0.57" opacity="1.0" textLength="641.2" lengthAdjust="spacingAndGlyphs">включает знания умения навыки опыт деятельности личностные качества мотивацию</text>
<text x="260.9" y="389.3" font-family="'Liberation Sans', sans-serif" font-size="16.2" font-weight="400" fill="#e6e6e6" stroke="#e6e6e6" stroke-width="0.57" opacity="1.0" textLength="358.1" lengthAdjust="spacingAndGlyphs">ценности способности саморазвитие психологии</text>
<text x="260.9" y="417.6" font-family="'Liberation Sans', sans-serif" font-size="16.2" font-weight="400" fill="#e6e6e6" stroke="#e6e6e6" stroke-width="0.57" opacity="1.0" textLength="524.6" lengthAdjust="spacingAndGlyphs">педагогике профессиональная компетентность специалиста включает</text>
<text x="260.9" y="445.9" font-family="'Liberation Sans', sans-serif" font-size="16.2" font-weight="400" fill="#e6e6e6" stroke="#e6e6e6" stroke-width="0.57" opacity="1.0" textLength="358.1" lengthAdjust="spacingAndGlyphs">знания умения навыки опыт деятельности личностные</text>
<text x="260.9" y="479.2" font-family="'Liberation Sans', sans-serif" font-size="16.2" font-weight="400" fill="#e6e6e6" stroke="#e6e6e6" stroke-width="0.57" opacity="1.0" textLength="641.2" lengthAdjust="spacingAndGlyphs">качества мотивацию ценности способности саморазвитие психологии педагогике профессиональная</text>
<text x="260.9" y="505.9" font-family="'Liberation Sans', sans-serif" font-size="16.2" font-weight="400" fill="#e6e6e6" stroke="#e6e6e6" stroke-width="0.57" opacity="1.0" textLength="641.2" lengthAdjust="spacingAndGlyphs">компетентность специалиста включает знания умения навыки опыт деятельности личностные</text>
<text x="260.9" y="532.5" font-family="'Liberation Sans', sans-serif" font-size="16.2" font-weight="400" fill="#e6e6e6" stroke="#e6e6e6" stroke-width="0.57" opacity="1.0" textLength="316.4" lengthAdjust="spacingAndGlyphs">качества мотивацию ценности способности</text>
<text x="215.1" y="279.4" font-family="'Liberation Serif', serif" font-size="10.0" font-weight="400" fill="#e6e6e6" stroke="#e6e6e6" stroke-width="0.35" opacity="0.7" textLength="16.7" lengthAdjust="spacingAndGlyphs">1.</text>
<text x="215.1" y="364.3" font-family="'Liberation Serif', serif" font-size="10.0" font-weight="400" fill="#e6e6e6" stroke="#e6e6e6" stroke-width="0.35" opacity="0.7" textLength="16.7" lengthAdjust="spacingAndGlyphs">2.</text>
<text x="215.1" y="417.6" font-family="'Liberation Serif', serif" font-size="10.0" font-weight="400" fill="#e6e6e6" stroke="#e6e6e6" stroke-width="0.35" opacity="0.7" textLength="16.7" lengthAdjust="spacingAndGlyphs">3.</text>
<text x="215.1" y="479.2" font-family="'Liberation Serif', serif" font-size="10.0" font-weight="400" fill="#e6e6e6" stroke="#e6e6e6" stroke-width="0.35" opacity="0.7" textLength="16.7" lengthAdjust="spacingAndGlyphs">4.</text></g>
<text x="9" y="460.4" font-family="'Liberation Sans', sans-serif" font-size="11" fill="#5c5c5c">6</text>
<g transform="translate(24.9,524.0) scale(0.12009) translate(-161,-112)" clip-path="url(#slideclip)"><rect x="161" y="112" width="815.2" height="458.8" fill="url(#slidebg)"/>
<text x="244.3" y="179.4" font-family="'Liberation Serif', serif" font-size="19.2" font-weight="400" fill="#e6e6e6" stroke="#e6e6e6" stroke-width="0.67" opacity="1.0" textLength="641.2" lengthAdjust="spacingAndGlyphs">Концепция профессионализма (Э.М.Бывайский,</text>
<text x="452.4" y="213.6" font-family="'Liberation Serif', serif" font-size="19.2" font-weight="400" fill="#e6e6e6" stroke="#e6e6e6" stroke-width="0.67" opacity="1.0" textLength="224.8" lengthAdjust="spacingAndGlyphs">Н.Г.Бондарева)</text>
<text x="194.3" y="266.9" font-family="'Liberation Serif', serif" font-size="11.7" font-weight="700" fill="#e02020" stroke="#e02020" stroke-width="0.41" opacity="0.95" textLength="95.8" lengthAdjust="spacingAndGlyphs">Профессионализм</text>
<text x="294.2" y="266.0" font-family="'Liberation Sans', sans-serif" font-size="14.8" font-weight="400" fill="#e6e6e6" stroke="#e6e6e6" stroke-width="0.52" opacity="1.0" textLength="616.2" lengthAdjust="spacingAndGlyphs">профессиональная компетентность специалиста включает знания умения навыки опыт</text>
<text x="194.3" y="286.9" font-family="'Liberation Sans', sans-serif" font-size="14.8" font-weight="400" fill="#e6e6e6" stroke="#e6e6e6" stroke-width="0.52" opacity="1.0" textLength="716.1" lengthAdjust="spacingAndGlyphs">деятельности личностные качества мотивацию ценности способности саморазвитие психологии педагогике</text>
<text x="194.3" y="307.7" font-family="'Liberation Sans', sans-serif" font-size="14.8" font-weight="400" fill="#e6e6e6" stroke="#e6e6e6" stroke-width="0.52" opacity="1.0" textLength="50.0" lengthAdjust="spacingAndGlyphs">профессиональная</text>
<text x="194.3" y="366.0" font-family="'Liberation Sans', sans-serif" font-size="15.8" font-weight="700" fill="#e6e6e6" stroke="#e6e6e6" stroke-width="0.55" opacity="1.0" textLength="333.1" lengthAdjust="spacingAndGlyphs">компетентность специалиста включает знания</text>
<text x="219.3" y="390.9" font-family="'Liberation Sans', sans-serif" font-size="14.8" font-weight="400" fill="#e6e6e6" stroke="#e6e6e6" stroke-width="0.52" opacity="1.0" textLength="724.4" lengthAdjust="spacingAndGlyphs">умения навыки опыт деятельности личностные качества мотивацию ценности способности саморазвитие</text>
<text x="219.3" y="407.6" font-family="'Liberation Sans', sans-serif" font-size="14.8" font-weight="400" fill="#e6e6e6" stroke="#e6e6e6" stroke-width="0.52" opacity="1.0" textLength="491.3" lengthAdjust="spacingAndGlyphs">психологии педагогике профессиональная компетентность специалиста</text>
<text x="219.3" y="436.7" font-family="'Liberation Sans', sans-serif" font-size="14.8" font-weight="400" fill="#e6e6e6" stroke="#e6e6e6" stroke-width="0.52" opacity="1.0" textLength="507.9" lengthAdjust="spacingAndGlyphs">включает знания умения навыки опыт деятельности личностные качества</text>
<text x="219.3" y="461.7" font-family="'Liberation Sans', sans-serif" font-size="14.8" font-weight="400" fill="#e6e6e6" stroke="#e6e6e6" stroke-width="0.52" opacity="1.0" textLength="691.1" lengthAdjust="spacingAndGlyphs">мотивацию ценности способности саморазвитие психологии педагогике профессиональная компетентность</text>
<text x="219.3" y="478.4" font-family="'Liberation Sans', sans-serif" font-size="14.8" font-weight="400" fill="#e6e6e6" stroke="#e6e6e6" stroke-width="0.52" opacity="1.0" textLength="274.8" lengthAdjust="spacingAndGlyphs">специалиста включает знания умения</text>
<text x="219.3" y="507.5" font-family="'Liberation Sans', sans-serif" font-size="14.8" font-weight="400" fill="#e6e6e6" stroke="#e6e6e6" stroke-width="0.52" opacity="1.0" textLength="641.2" lengthAdjust="spacingAndGlyphs">навыки опыт деятельности личностные качества мотивацию ценности способности саморазвитие</text>
<text x="219.3" y="528.3" font-family="'Liberation Sans', sans-serif" font-size="14.8" font-weight="400" fill="#e6e6e6" stroke="#e6e6e6" stroke-width="0.52" opacity="1.0" textLength="607.9" lengthAdjust="spacingAndGlyphs">психологии педагогике профессиональная компетентность специалиста включает знания</text></g>
<text x="9" y="530.8" font-family="'Liberation Sans', sans-serif" font-size="11" fill="#5c5c5c">7</text>
<g transform="translate(24.9,594.45) scale(0.12009) translate(-161,-112)" clip-path="url(#slideclip)"><rect x="161" y="112" width="815.2" height="458.8" fill="url(#slidebg)"/></g>
<text x="9" y="601.2" font-family="'Liberation Sans', sans-serif" font-size="11" fill="#5c5c5c">8</text>
</g>
<rect x="137.2" y="87.5" width="11.6" height="509.5" fill="#f0f0f0"/>
<rect x="137.6" y="88.3" width="10.8" height="11" fill="#fff" stroke="#c8c8c8" stroke-width="0.8"/>
<path d="M140.3 95.8 L143 92.6 L145.7 95.8 Z" fill="#222"/>
<rect x="137.6" y="100" width="10.8" height="341.5" fill="#fff" stroke="#d0d0d0" stroke-width="0.6"/>
<rect x="137.6" y="585" width="10.8" height="10.8" fill="#fff" stroke="#c8c8c8" stroke-width="0.8"/>
<path d="M140.3 588.8 L143 592 L145.7 588.8 Z" fill="#222"/>
<rect x="151" y="87.2" width="1" height="510" fill="#d6d6d6"/>
<rect x="161" y="112" width="815.2" height="458.8" fill="url(#slidebg)"/>
<rect x="161" y="112" width="815.2" height="458.8" fill="#000" opacity="0" />
<text x="262" y="177.9" font-family="'Liberation Serif', serif" font-size="33" fill="#d9d9d9" textLength="612.6" lengthAdjust="spacingAndGlyphs">Квалификационная и компетентная модель</text>
<text x="337" y="214.6" font-family="'Liberation Serif', serif" font-size="33" fill="#d9d9d9" textLength="462.8" lengthAdjust="spacingAndGlyphs">профессиональной деятельности</text>
<rect x="205.3" y="260.2" width="363.9" height="89.6" rx="13" fill="#bb461c"/>
<text x="228.3" y="314" font-family="'Liberation Serif', serif" font-size="24" font-weight="700" fill="#ffffff" textLength="317.5" lengthAdjust="spacingAndGlyphs">Квалификационная модель</text>
<rect x="216.9" y="438.1" width="363.6" height="89.3" rx="13" fill="#bb461c"/>
<text x="272.4" y="492.2" font-family="'Liberation Serif', serif" font-size="24" font-weight="700" fill="#ffffff" textLength="253.4" lengthAdjust="spacingAndGlyphs">Компетентная модель</text>
<path d="M388.3 366.6 V413" stroke="#fff" stroke-width="5" stroke-linecap="round"/>
<path d="M380.5 411.7 H396 L388.3 427 Z" fill="#fff"/>
<path d="M599 262.2 C605 261.3 611 261.09999999999997 615.5 262.5 C618.5 263.7 619.2 265.7 619.2 268.7 V300.4 C619.2 303.7 621 304.9 624 304.9 H638.5 M624 304.9 C621 304.9 619.2 306.09999999999997 619.2 309.4 V341.8 C619.2 344.8 618.5 346.8 615.5 348.0 C611 349.40000000000003 605 349.2 599 348.3" fill="none" stroke="#fff" stroke-width="3.4" stroke-linecap="round" stroke-linejoin="round"/>
<path d="M599 440.0 C605 439.1 611 438.9 615.5 440.3 C618.5 441.5 619.2 443.5 619.2 446.5 V478.1 C619.2 481.40000000000003 621 482.6 624 482.6 H638.5 M624 482.6 C621 482.6 619.2 483.8 619.2 487.1 V519 C619.2 522 618.5 524 615.5 525.2 C611 526.6 605 526.4 599 525.5" fill="none" stroke="#fff" stroke-width="3.4" stroke-linecap="round" stroke-linejoin="round"/>
<text x="664.4" y="280.6" font-family="'Liberation Serif', serif" font-size="18.5" fill="#f0f0f0" stroke="#f0f0f0" stroke-width="0.25" textLength="237.8" lengthAdjust="spacingAndGlyphs">Жестко привязана к объекту и</text>
<text x="664.4" y="300.8" font-family="'Liberation Serif', serif" font-size="18.5" fill="#f0f0f0" stroke="#f0f0f0" stroke-width="0.25" textLength="220.0" lengthAdjust="spacingAndGlyphs">месту труда; от специалиста</text>
<text x="664.4" y="321.1" font-family="'Liberation Serif', serif" font-size="18.5" fill="#f0f0f0" stroke="#f0f0f0" stroke-width="0.25" textLength="202.6" lengthAdjust="spacingAndGlyphs">требуется исключительно</text>
<text x="664.4" y="341.2" font-family="'Liberation Serif', serif" font-size="18.5" fill="#f0f0f0" stroke="#f0f0f0" stroke-width="0.25" textLength="210.3" lengthAdjust="spacingAndGlyphs">высокий профессионализм</text>
<text x="664.4" y="457.2" font-family="'Liberation Serif', serif" font-size="18.5" fill="#f0f0f0" stroke="#f0f0f0" stroke-width="0.25" textLength="252.6" lengthAdjust="spacingAndGlyphs">От специалиста требуется уметь</text>
<text x="664.4" y="477.2" font-family="'Liberation Serif', serif" font-size="18.5" fill="#f0f0f0" stroke="#f0f0f0" stroke-width="0.25" textLength="291.9" lengthAdjust="spacingAndGlyphs">решать задачи различной сложности;</text>
<text x="664.4" y="497.2" font-family="'Liberation Serif', serif" font-size="18.5" fill="#f0f0f0" stroke="#f0f0f0" stroke-width="0.25" textLength="261.8" lengthAdjust="spacingAndGlyphs">многообразие профессиональных</text>
<text x="664.4" y="517.2" font-family="'Liberation Serif', serif" font-size="18.5" fill="#f0f0f0" stroke="#f0f0f0" stroke-width="0.25" textLength="274.2" lengthAdjust="spacingAndGlyphs">смежных навыков; разностороннее</text>
<text x="664.4" y="536.8" font-family="'Liberation Serif', serif" font-size="18.5" fill="#f0f0f0" stroke="#f0f0f0" stroke-width="0.25" textLength="70.6" lengthAdjust="spacingAndGlyphs">развитие</text>
<rect x="161" y="112" width="815.2" height="458.8" filter="url(#noise)" opacity="0.07"/>
<rect x="987.5" y="87.5" width="12.5" height="466" fill="#f0f0f0"/>
<rect x="988.2" y="89" width="11" height="10.5" fill="#fff" stroke="#c8c8c8" stroke-width="0.8"/>
<path d="M991 96.2 L993.7 93 L996.4 96.2 Z" fill="#222"/>
<rect x="988.2" y="234.3" width="11" height="44.1" fill="#fff" stroke="#c8c8c8" stroke-width="0.8"/>
<rect x="988.2" y="547" width="11" height="11" fill="#fff" stroke="#c8c8c8" stroke-width="0.8"/>
<path d="M991 551 L993.7 554.2 L996.4 551 Z" fill="#222"/>
<path d="M990.5 565 L993.7 560.5 L996.9 565 Z M990.5 569 L993.7 564.5 L996.9 569 Z" fill="#6b6b6b"/>
<path d="M990.5 572.5 L993.7 577 L996.9 572.5 Z M990.5 576.5 L993.7 581 L996.9 576.5 Z" fill="#6b6b6b"/>
<rect x="0" y="597" width="1000" height="16" fill="#f3f3f3"/>
<rect x="0" y="597" width="1000" height="0.8" fill="#d4d4d4"/>
<rect x="0" y="613" width="1000" height="4" fill="#f8dec8"/>
<text x="5.00" y="608.30" font-family="'Liberation Sans', sans-serif" font-size="7.6" font-weight="400" fill="#444" stroke="#444" stroke-width="0.12" textLength="46.00" lengthAdjust="spacingAndGlyphs" >Слайд 4 из 10</text>
<path d="M63.5 601.5 H69 V609 H63.5 Z" fill="none" stroke="#777" stroke-width="0.7"/><path d="M68 606 L72.5 601.5 L73.3 602.3 L68.8 606.8 Z" fill="#777"/>
<text x="85.00" y="608.30" font-family="'Liberation Sans', sans-serif" font-size="7.6" font-weight="400" fill="#444" stroke="#444" stroke-width="0.12" textLength="26.00" lengthAdjust="spacingAndGlyphs" >русский</text>
<circle cx="125.5" cy="603.5" r="3" fill="none" stroke="#555" stroke-width="0.8"/><path d="M127 606 L132 611 M132 606 L127 611" stroke="#555" stroke-width="0.9"/>
<text x="133.70" y="608.30" font-family="'Liberation Sans', sans-serif" font-size="7.6" font-weight="400" fill="#444" stroke="#444" stroke-width="0.12" textLength="182.30" lengthAdjust="spacingAndGlyphs" >Специальные возможности: проверьте рекомендации</text>
<path d="M633 607 H641 M633 608.8 H641 M634.5 605 H639.5 M637 601.8 L634.8 604 H639.2 Z" stroke="#888" stroke-width="0.7" fill="none"/>
<text x="644.30" y="608.30" font-family="'Liberation Sans', sans-serif" font-size="7.6" font-weight="400" fill="#444" stroke="#444" stroke-width="0.12" textLength="28.00" lengthAdjust="spacingAndGlyphs" >Заметки</text>
<path d="M685.2 601.3 H695 V607.6 H689.5 L687.3 609.8 V607.6 H685.2 Z" fill="#555"/>
<text x="697.50" y="608.30" font-family="'Liberation Sans', sans-serif" font-size="7.6" font-weight="400" fill="#444" stroke="#444" stroke-width="0.12" textLength="41.80" lengthAdjust="spacingAndGlyphs" >Примечания</text>
<rect x="752.4" y="597.8" width="26.8" height="14.7" fill="#c8c8c8"/>
<rect x="761" y="601.7" width="10" height="8" fill="none" stroke="#777" stroke-width="0.8"/><rect x="763.8" y="603.5" width="5" height="3" fill="none" stroke="#777" stroke-width="0.6"/><path d="M763 601.7 V609.7" stroke="#777" stroke-width="0.6"/>
<rect x="789.2" y="601.8" width="3.8" height="3" fill="none" stroke="#777" stroke-width="0.7"/><rect x="794" y="601.8" width="3.8" height="3" fill="none" stroke="#777" stroke-width="0.7"/><rect x="789.2" y="606.2" width="3.8" height="3" fill="none" stroke="#777" stroke-width="0.7"/><rect x="794" y="606.2" width="3.8" height="3" fill="none" stroke="#777" stroke-width="0.7"/>
<path d="M817 602 H826 V609.4 H817 Z M821.5 602 V609.4 M818.5 604 H820.5 M818.5 606 H820.5 M822.7 604 H824.7 M822.7 606 H824.7" fill="none" stroke="#777" stroke-width="0.7"/>
<path d="M844.4 601.8 H853.6 M845.3 601.8 V606.5 H852.7 V601.8 M849 606.5 V609.5 M846.5 609.7 H851.5" fill="none" stroke="#777" stroke-width="0.8"/>
<path d="M867 605.2 H871.6" stroke="#666" stroke-width="0.8"/>
<rect x="876" y="604.7" width="68.4" height="0.9" fill="#444"/>
<rect x="905.6" y="601.4" width="4.4" height="7.6" fill="#444"/>
<path d="M948 605.2 H953 M950.5 602.7 V607.7" stroke="#666" stroke-width="0.8"/>
<text x="961.60" y="608.30" font-family="'Liberation Sans', sans-serif" font-size="7.6" font-weight="400" fill="#444" stroke="#444" stroke-width="0.12" textLength="16.40" lengthAdjust="spacingAndGlyphs" >92 %</text>
<rect x="989" y="601.3" width="6.6" height="7.6" fill="none" stroke="#888" stroke-width="0.7"/><path d="M990.5 602.8 L992.3 604.6 M994.1 602.8 L992.3 604.6 M990.5 607.4 L992.3 605.6 M994.1 607.4 L992.3 605.6" stroke="#888" stroke-width="0.6"/>
</svg>
</body></html>
